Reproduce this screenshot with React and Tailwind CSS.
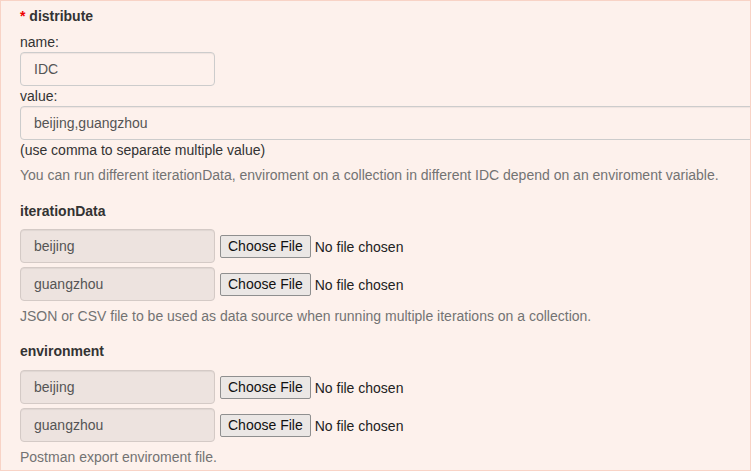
import React from "react";

const font = { fontFamily: '"Liberation Sans", Arial, sans-serif' };

function FileRow({ label }) {
  return (
    <div className="flex items-center">
      <div className="w-[195px] h-[34px] shrink-0 rounded-[4px] border border-[#d4cac6] bg-[#ede3df] px-[13px] flex items-center text-[14px] text-[#555] shadow-[inset_0_1px_1px_rgba(0,0,0,0.06)]">
        {label}
      </div>
      <input
        type="file"
        className="ml-[5px] text-[14px] leading-[20px] text-[#222] file:mr-[4px] file:h-[23px] file:px-[7px] file:border file:border-[#8f8f8f] file:rounded-[2px] file:bg-[#ebe7e5] file:text-[#111]"
      />
    </div>
  );
}

export default function App() {
  return (
    <div className="w-[751px] h-[473px] bg-white" style={font}>
      <div className="h-[471px] w-[751px] overflow-hidden border border-[#f8d3c6] bg-[#fdf1ec] pl-[19px] pt-[5px] text-[14px] leading-[20px] text-[#333]">
        <div className="font-bold">
          <span className="text-[#e00]">*</span> distribute
        </div>
        <div className="mt-[6px]">name:</div>
        <div className="w-[195px] h-[34px] rounded-[4px] border border-[#ccc] px-[13px] flex items-center text-[#555] shadow-[inset_0_1px_1px_rgba(0,0,0,0.06)]">
          IDC
        </div>
        <div>value:</div>
        <div className="w-[760px] h-[34px] rounded-[4px] border border-[#ccc] px-[13px] flex items-center text-[#555] shadow-[inset_0_1px_1px_rgba(0,0,0,0.06)]">
          beijing,guangzhou
        </div>
        <div>(use comma to separate multiple value)</div>
        <div className="mt-[5px] text-[#737373]">
          You can run different iterationData, enviroment on a collection in different IDC depend on an enviroment variable.
        </div>

        <div className="mt-[16px] font-bold">iterationData</div>
        <div className="mt-[8px] flex flex-col gap-[4px]">
          <FileRow label="beijing" />
          <FileRow label="guangzhou" />
        </div>
        <div className="mt-[5px] text-[#737373]">
          JSON or CSV file to be used as data source when running multiple iterations on a collection.
        </div>

        <div className="mt-[15px] font-bold">environment</div>
        <div className="mt-[9px] flex flex-col gap-[4px]">
          <FileRow label="beijing" />
          <FileRow label="guangzhou" />
        </div>
        <div className="mt-[5px] text-[#737373]">Postman export enviroment file.</div>
      </div>
    </div>
  );
}
